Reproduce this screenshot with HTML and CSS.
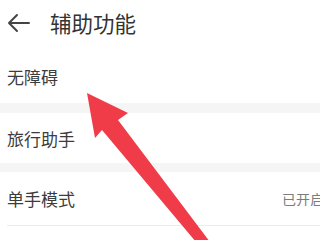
FILE: index.html
```html
<!DOCTYPE html>
<html lang="zh">
<head>
<meta charset="utf-8">
<link rel="stylesheet" href="styles.css">
</head>
<body>
<div class="page">
  <header class="header">
    <svg class="back" width="24" height="20" viewBox="0 0 24 20"><path d="M22 10H2M10 2L2 10L10 18" fill="none" stroke="#444" stroke-width="2" stroke-linecap="round" stroke-linejoin="round"/></svg>
    <span class="title">辅助功能</span>
  </header>
  <div class="row r1"><span class="label">无障碍</span></div>
  <div class="gap"></div>
  <div class="row r2"><span class="label">旅行助手</span></div>
  <div class="gap g2"></div>
  <div class="row r3"><span class="label">单手模式</span><span class="value">已开启</span></div>
  <div class="divider"></div>
  <svg class="pointer" width="320" height="240" viewBox="0 0 320 240"><polygon points="87,93 128,113 118,120 210,242 196,242 102,130 95,138" fill="#f03c48"/></svg>
</div>
</body>
</html>
```
FILE: styles.css
```css
html, body { margin: 0; padding: 0; background: #fff; }
.page {
  position: relative;
  width: 320px;
  height: 240px;
  overflow: hidden;
  font-family: "Noto Sans CJK SC", "Noto Sans", sans-serif;
  display: flex;
  flex-direction: column;
}
.header {
  height: 50px;
  display: flex;
  align-items: center;
  padding-left: 7px;
  padding-bottom: 4px;
  box-sizing: border-box;
}
.back { flex: none; margin-right: 19px; }
.title { font-size: 21.5px; color: #333; line-height: 1; }
.row {
  display: flex;
  align-items: center;
  justify-content: space-between;
  padding-left: 7px;
  box-sizing: border-box;
}
.r1 { height: 53px; }
.r2 { height: 50px; }
.r3 { height: 53px; }
.label { font-size: 17px; color: #3c3c3c; line-height: 1; }
.value { font-size: 14px; color: #7c7c7c; line-height: 1; width: 38px; white-space: nowrap; overflow: hidden; }
.gap { height: 10px; background: #f5f5f5; }
.g2 { height: 9px; }
.divider { height: 1px; background: #ececec; margin-left: 7px; }
.pointer { position: absolute; left: 0; top: 0; }
```
